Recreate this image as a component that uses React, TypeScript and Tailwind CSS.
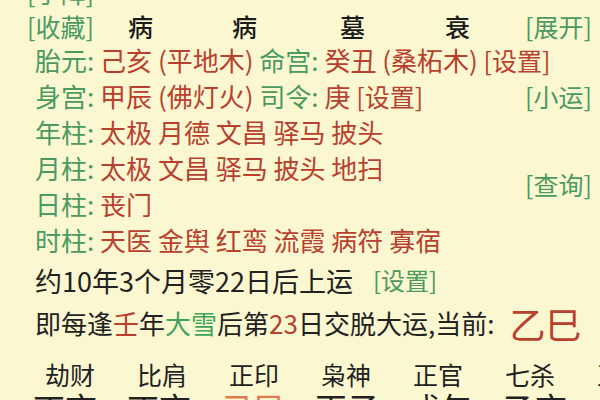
import React from 'react';

const G = 'text-[#4a9a62]';
const R = 'text-[#b8402e]';

function Row({ label, children, right }: { label: string; children: React.ReactNode; right?: string }) {
  return (
    <div className="flex h-[36px] items-center justify-between">
      <div className="flex items-center pl-[35px] whitespace-nowrap">
        <span className={G}>{label}:&nbsp;</span>
        {children}
      </div>
      {right && <span className={`${G} text-[25px] pr-[8px]`}>{right}</span>}
    </div>
  );
}

export default function App() {
  const gods = ['劫财', '比肩', '正印', '枭神', '正官', '七杀', '正财'];
  const pillars = [
    { t: '丁亥', c: 'text-[#222]' },
    { t: '丁亥', c: 'text-[#222]' },
    { t: '己巳', c: 'text-[#e0794e]' },
    { t: '丙子', c: 'text-[#222]' },
    { t: '戊午', c: 'text-[#222]' },
    { t: '乙亥', c: 'text-[#222]' },
  ];

  return (
    <div
      className="w-[600px] h-[400px] overflow-hidden bg-[#fbf8d1] text-[26px] leading-none"
      style={{ fontFamily: '"Noto Sans CJK SC", "Noto Sans", sans-serif' }}
    >
      <div className="mt-[-26px] flex flex-col">
        {/* partial top row */}
        <div className="flex h-[36px] items-center pl-[27px]">
          <span className={`${G} text-[25px]`}>[手阵]</span>
        </div>

        {/* 十二长生 header */}
        <div className="flex h-[32px] items-center justify-between">
          <div className="flex items-center pl-[27px]">
            <span className={`${G} text-[25px] w-[101px]`}>[收藏]</span>
            <span className="w-[104px] text-[25px] font-medium text-[#1c1c1c]">病</span>
            <span className="w-[108px] text-[25px] font-medium text-[#1c1c1c]">病</span>
            <span className="w-[105px] text-[25px] font-medium text-[#1c1c1c]">墓</span>
            <span className="text-[25px] font-medium text-[#1c1c1c]">衰</span>
          </div>
          <span className={`${G} text-[25px] pr-[8px]`}>[展开]</span>
        </div>

        <Row label="胎元">
          <span className={R}>己亥 (平地木)&nbsp;</span>
          <span className={G}>命宫:&nbsp;</span>
          <span className={R}>癸丑 (桑柘木)&nbsp;</span>
          <span className={`${R} text-[25px]`}>[设置]</span>
        </Row>
        <Row label="身宫" right="[小运]">
          <span className={R}>甲辰 (佛灯火)&nbsp;</span>
          <span className={G}>司令:&nbsp;</span>
          <span className={R}>庚&nbsp;</span>
          <span className={`${R} text-[25px]`}>[设置]</span>
        </Row>
        <Row label="年柱">
          <span className={R}>太极 月德 文昌 驿马 披头</span>
        </Row>

        <div className="flex items-start justify-between">
          <div className="flex flex-col">
            <Row label="月柱">
              <span className={R}>太极 文昌 驿马 披头 地扫</span>
            </Row>
            <Row label="日柱">
              <span className={R}>丧门</span>
            </Row>
          </div>
          <span className={`${G} text-[25px] pr-[8px] mt-[22px]`}>[查询]</span>
        </div>

        <Row label="时柱">
          <span className={R}>天医 金舆 红鸾 流霞 病符 寡宿</span>
        </Row>

        {/* 起运 */}
        <div className="flex h-[44px] items-center pl-[35px] text-[27px] text-[#222] whitespace-nowrap">
          约10年3个月零22日后上运
          <span className={`${G} text-[24px] ml-[20px]`}>[设置]</span>
        </div>
        <div className="flex h-[42px] items-center pl-[35px] text-[26px] text-[#222] whitespace-nowrap">
          即每逢<span className={R}>壬</span>年<span className="text-[#3fa45a]">大雪</span>后第
          <span className={R}>23</span>日交脱大运,当前:
          <span className={`${R} text-[36px] ml-[15px]`}>乙巳</span>
        </div>

        {/* 十神 */}
        <div className="mt-[10px] flex h-[40px] items-center pl-[45px] text-[25px] text-[#222] whitespace-nowrap">
          {gods.map((g, i) => (
            <span key={i} className="w-[92px] shrink-0">
              {g}
            </span>
          ))}
        </div>

        {/* 干支 (cut off) */}
        <div className="mt-[-3px] flex pl-[33px] text-[32px] whitespace-nowrap">
          {pillars.map((p, i) => (
            <span key={i} className={`${p.c} w-[94px] shrink-0`}>
              {p.t}
            </span>
          ))}
        </div>
      </div>
    </div>
  );
}
